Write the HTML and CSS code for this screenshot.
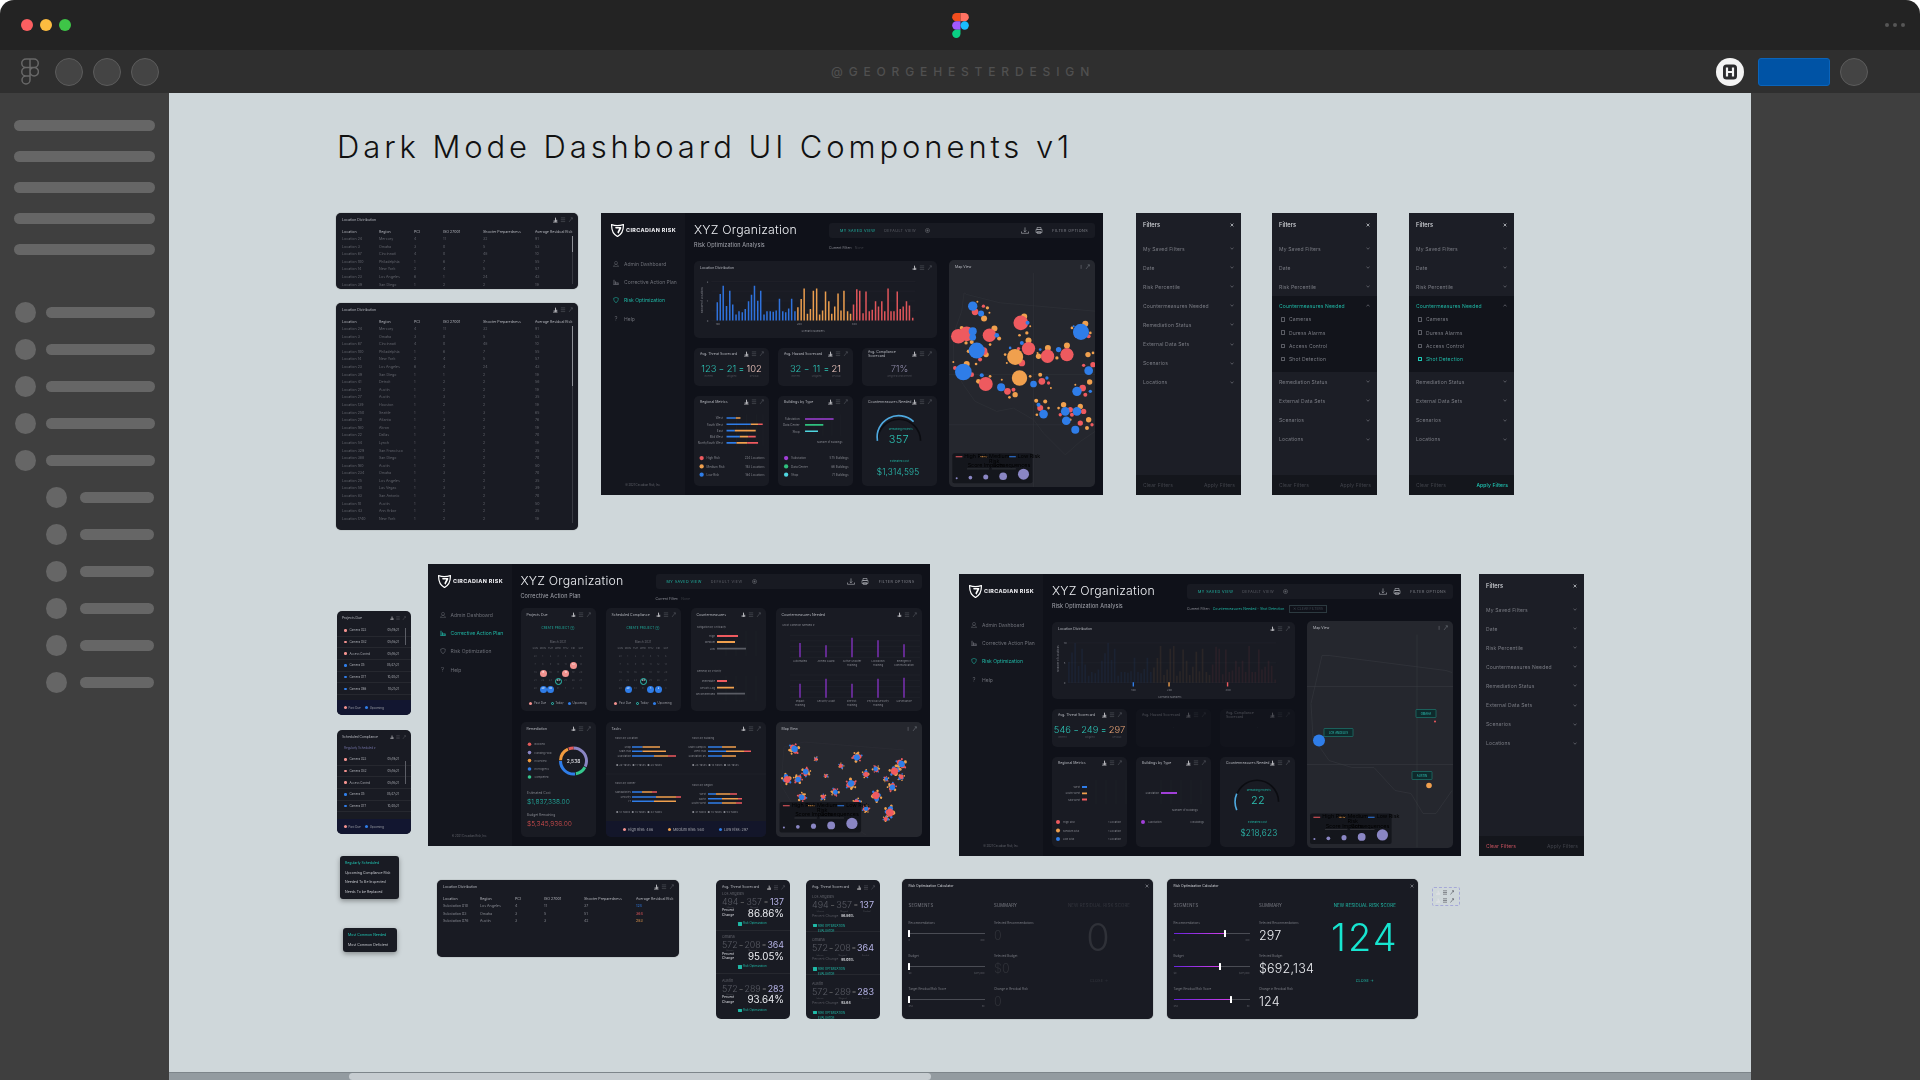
FILE: index.html
```html
<!DOCTYPE html>
<html lang="en">
<head>
<meta charset="utf-8">
<title>Dark Mode Dashboard UI Components v1</title>
<link rel="stylesheet" href="styles.css">
</head>
<body>
<svg class="sprite" aria-hidden="true">
  <defs>
    <symbol id="tools" viewBox="0 0 18 5"><path d="M0 5h4M1 4.500V3M2.200 4.500V.6M3.300 4.500V2.500" stroke="#e6e6ea" stroke-width=".7" fill="none"/><path d="M7 .8h4M7 2.500h4M7 4.200h4M14.500 4.500l3-3.800M16 .7h1.500v1.500" stroke="#50525a" stroke-width=".6" fill="none"/></symbol>
    <symbol id="tools2" viewBox="0 0 18 5"><path d="M10 .8v3.600M14.500 4.500l3-3.800M16 .7h1.500v1.500" stroke="#6a6c74" stroke-width=".6" fill="none"/></symbol>
    <symbol id="chev" viewBox="0 0 4 3"><path d="M.5 .8l1.500 1.400 1.500-1.400" stroke="currentColor" stroke-width=".7" fill="none"/></symbol>
    <symbol id="chevu" viewBox="0 0 4 3"><path d="M.5 2.200l1.500-1.400 1.500 1.400" stroke="currentColor" stroke-width=".7" fill="none"/></symbol>
    <symbol id="x" viewBox="0 0 4 4"><path d="M.6 .6l2.800 2.800M3.400 .6L.6 3.400" stroke="currentColor" stroke-width=".7"/></symbol>
    <symbol id="shield" viewBox="0 0 14 14"><path d="M.7 .7c3 1 9 1 12.600 0 .3 5.500-1.800 10.500-6.300 12.800C2.600 11.200.4 6.200.7 .7z" fill="none" stroke="#fff" stroke-width="1.300"/><path d="M4.500 3.200h6.500v1.600L8 10.500 6.800 8.800l2-4H5z" fill="#fff"/></symbol>
    <symbol id="n-user" viewBox="0 0 6 6"><path d="M3 .4a1.500 1.500 0 1 1 0 3 1.500 1.500 0 0 1 0-3zM.5 5.600c.4-1.400 1.300-2.200 2.500-2.200s2.100.8 2.500 2.200z" fill="none" stroke="currentColor" stroke-width=".45"/></symbol>
    <symbol id="n-bars" viewBox="0 0 6 6"><path d="M.3 5.700h5.400M1 5.400V.8M2.500 5.400V2.400M4 5.400V3M5.200 5.400V3.600" stroke="currentColor" stroke-width=".8" fill="none"/></symbol>
    <symbol id="n-shield" viewBox="0 0 6 6"><path d="M.7 1.200C1.800 1 2.500.7 3 .3c.5.400 1.200.7 2.300.9.100 2.100-.7 3.600-2.300 4.500C1.400 4.800.6 3.300.7 1.200z" fill="none" stroke="currentColor" stroke-width=".55"/></symbol>
    <symbol id="t-down" viewBox="0 0 8 7"><path d="M.5 6.300h7M.5 6.300V4.500M7.500 6.300V4.500M4 .4v4.400M2.700 3.500L4 4.800l1.300-1.300" stroke="#b3b5bc" stroke-width=".6" fill="none"/></symbol>
    <symbol id="t-print" viewBox="0 0 8 7"><path d="M2 .5h4v2H2zM1 2.500h6v3H1zM2.300 4.500h3.400v2H2.300z" stroke="#b3b5bc" stroke-width=".6" fill="none"/></symbol>
    <symbol id="t-plus" viewBox="0 0 6 6"><circle cx="3" cy="3" r="2.500" stroke="#8a8c94" stroke-width=".5" fill="none"/><path d="M3 1.600v2.800M1.600 3h2.800" stroke="#8a8c94" stroke-width=".5"/></symbol>
    <g id="bars1" fill="none" stroke-width="4.600">
      <path stroke="#2f72dc" d="M348 330v-55M357 330v-80M366 330v-105M376 330v-44M386 330v-90M395 330v-48M405 330v-18M414 330v-28M424 330v-25M433 330v-35M443 330v-58M452 330v-78M461 330v-105M471 330v-60M480 330v-90M490 330v-18M499 330v-28M509 330v-28M518 330v-26M527 330v-30M537 330v-66M547 330v-28M556 330v-25M565 330v-36M574 330v-66M584 330v-28"/>
      <path stroke="#ea9d4e" d="M593 330v-40M603 330v-65M612 330v-97M622 330v-20M631 330v-35M640 330v-90M650 330v-97M659 330v-18M668 330v-30M677 330v-88M687 330v-58M696 330v-20M705 330v-42M715 330v-82M724 330v-30M733 330v-90M744 330v-28M753 330v-20"/>
      <path stroke="#e0555a" d="M762 330v-48M772 330v-95M781 330v-90M791 330v-22M800 330v-88M810 330v-28M819 330v-32M829 330v-58M838 330v-42M848 330v-58M857 330v-28M867 330v-97M876 330v-28M885 330v-28M895 330v-88M904 330v-35M913 330v-42M923 330v-58M932 330v-45M942 330v-8"/>
    </g>
    <g id="legend">
      <rect width="240" height="90" rx="6" fill="#14161c"/>
      <path d="M10 11h20" stroke="#ee5a5f" stroke-width="3"/><path d="M84 11h20" stroke="#f0a04e" stroke-width="3"/><path d="M170 11h20" stroke="#2f7de8" stroke-width="3"/>
      <text class="sm" x="36" y="14">High Risk</text><text class="sm" x="110" y="14">Medium</text><text class="sm" x="110" y="28">Risk</text><text class="sm" x="196" y="14">Low Risk</text>
      <text class="sm" x="46" y="42">Score Impacts</text><text class="sm" x="120" y="42">Consequences</text>
      <path d="M44 47h66M118 47h72" stroke="#6a6c74" stroke-width="1"/>
      <g fill="#8a86c4"><circle cx="13" cy="75" r="3"/><circle cx="54" cy="73" r="5.500"/><circle cx="100" cy="71" r="7.500"/><circle cx="152" cy="69" r="11.500"/><circle cx="213" cy="63" r="16.500"/></g>
    </g>
    <g id="cl">
      <circle cx="3" cy="-2.200" r="1.200" fill="#f0a04e"/><circle cx="-3" cy="2" r="1" fill="#f0a04e"/><circle cx="-3.800" cy="-1.500" r=".8" fill="#2f7de8"/><circle cx="3.600" cy="2" r=".8" fill="#ee5a5f"/><circle cx="0" cy="-3.800" r=".8" fill="#ee5a5f"/><circle cx="-.5" cy="4" r=".8" fill="#f0a04e"/>
      <circle cx="-1.500" cy="-1" r="2" fill="#ee5a5f"/><circle cx="1.500" cy="1.300" r="1.800" fill="#ee5a5f"/><circle cx="-1.400" cy="1.700" r="1.400" fill="#f0a04e"/><circle cx=".4" cy="-.2" r="2.500" fill="#2f7de8"/>
    </g>
    <g id="cl2">
      <circle cx="3.400" cy="1" r=".9" fill="#2f7de8"/><circle cx="-3" cy="-2.800" r=".9" fill="#f0a04e"/><circle cx="-3.500" cy="1.400" r=".9" fill="#f0a04e"/><circle cx="1.500" cy="3.500" r=".9" fill="#f0a04e"/>
      <circle cx="-1.800" cy="-1.400" r="1.700" fill="#2f7de8"/><circle cx="1.500" cy="-1.500" r="1.500" fill="#f0a04e"/><circle cx="-1.200" cy="1.800" r="1.400" fill="#2f7de8"/><circle cx=".3" cy=".3" r="2.600" fill="#ee5a5f"/>
    </g>
  </defs>
</svg>

<div class="shell">
  <header class="titlebar">
    <div class="lights"><i class="l-red"></i><i class="l-yellow"></i><i class="l-green"></i></div>
    <svg class="figma" viewBox="0 0 16 24"><path d="M0 4a4 4 0 0 1 4-4h4v8H4a4 4 0 0 1-4-4z" fill="#f24e1e"/><path d="M8 0h4a4 4 0 0 1 0 8H8z" fill="#ff7262"/><path d="M0 12a4 4 0 0 1 4-4h4v8H4a4 4 0 0 1-4-4z" fill="#a259ff"/><circle cx="12" cy="12" r="4" fill="#1abcfe"/><path d="M0 20a4 4 0 0 1 4-4h4v4a4 4 0 0 1-8 0z" fill="#0acf83"/></svg>
    <div class="dots"><i></i><i></i><i></i></div>
  </header>
  <div class="toolbar">
    <div class="tb-left">
      <svg class="figma-o" viewBox="0 0 18 27"><path d="M9 1H5a4 4 0 0 0 0 8.500h4zM9 1h4a4 4 0 0 1 0 8.500H9zM9 9.500H5a4 4 0 0 0 0 8.500h4zM9 18H5a4 4 0 1 0 4 4zM9 13.700a4.200 4.200 0 1 0 8.400 0 4.200 4.200 0 0 0-8.400 0z" fill="none" stroke="#686868" stroke-width="1.500"/></svg>
      <i class="tb-circle"></i><i class="tb-circle"></i><i class="tb-circle"></i>
    </div>
    <div class="tb-brand">@GEORGEHESTERDESIGN</div>
    <div class="tb-right">
      <svg class="hlogo" viewBox="0 0 28 28"><circle cx="14" cy="14" r="14" fill="#f4f4f4"/><rect x="7" y="6.500" width="14" height="15" rx="3.500" fill="#2c2c2e"/><path d="M11 9.500v9M17 9.500v9M11 14h6" stroke="#f4f4f4" stroke-width="2.200" fill="none"/></svg>
      <i class="tb-blue"></i>
      <i class="tb-circle"></i>
    </div>
  </div>
  <div class="body">
    <aside class="side">
      <div class="pills"><i></i><i></i><i></i><i></i><i></i></div>
      <div class="rows">
        <div class="s-row"><b></b><i></i></div><div class="s-row"><b></b><i></i></div><div class="s-row"><b></b><i></i></div><div class="s-row"><b></b><i></i></div><div class="s-row"><b></b><i></i></div>
        <div class="s-row in"><b></b><i></i></div><div class="s-row in"><b></b><i></i></div><div class="s-row in"><b></b><i></i></div><div class="s-row in"><b></b><i></i></div><div class="s-row in"><b></b><i></i></div><div class="s-row in"><b></b><i></i></div>
      </div>
    </aside>

    <main class="canvas">
      <h1 class="page-title">Dark Mode Dashboard UI Components v1</h1>

      <!-- tables -->
      <section class="frame tbl f-ta">
        <header class="c-head"><span>Location Distribution</span><svg class="tools"><use href="#tools"/></svg></header>
        <table><colgroup><col class="c1"><col class="c2"><col class="c3"><col class="c4"><col class="c5"><col></colgroup>
          <thead><tr><th>Location</th><th>Region</th><th>PCI</th><th>ISO 27001</th><th>Shooter Preparedness</th><th>Average Residual Risk</th></tr></thead>
          <tbody>
            <tr><td>Location 24</td><td>Mercury</td><td>4</td><td>11</td><td>32</td><td>91</td></tr>
            <tr><td>Location 3</td><td>Omaha</td><td>3</td><td>0</td><td>5</td><td>53</td></tr>
            <tr><td>Location 67</td><td>Cincinnati</td><td>4</td><td>0</td><td>48</td><td>10</td></tr>
            <tr><td>Location 100</td><td>Philadelphia</td><td>1</td><td>6</td><td>7</td><td>55</td></tr>
            <tr><td>Location 14</td><td>New York</td><td>2</td><td>4</td><td>5</td><td>57</td></tr>
            <tr><td>Location 23</td><td>Los Angeles</td><td>6</td><td>1</td><td>24</td><td>43</td></tr>
            <tr><td>Location 39</td><td>San Diego</td><td>1</td><td>2</td><td>2</td><td>19</td></tr>
          </tbody></table>
        <i class="t-scroll t-s1"></i>
      </section>
      <section class="frame tbl f-tb">
        <header class="c-head"><span>Location Distribution</span><svg class="tools"><use href="#tools"/></svg></header>
        <table><colgroup><col class="c1"><col class="c2"><col class="c3"><col class="c4"><col class="c5"><col></colgroup>
          <thead><tr><th>Location</th><th>Region</th><th>PCI</th><th>ISO 27001</th><th>Shooter Preparedness</th><th>Average Residual Risk</th></tr></thead>
          <tbody>
            <tr><td>Location 24</td><td>Mercury</td><td>4</td><td>11</td><td>32</td><td>91</td></tr>
            <tr><td>Location 3</td><td>Omaha</td><td>3</td><td>0</td><td>5</td><td>53</td></tr>
            <tr><td>Location 67</td><td>Cincinnati</td><td>4</td><td>0</td><td>48</td><td>10</td></tr>
            <tr><td>Location 100</td><td>Philadelphia</td><td>1</td><td>6</td><td>7</td><td>55</td></tr>
            <tr><td>Location 14</td><td>New York</td><td>2</td><td>4</td><td>5</td><td>57</td></tr>
            <tr><td>Location 23</td><td>Los Angeles</td><td>6</td><td>4</td><td>24</td><td>43</td></tr>
            <tr><td>Location 39</td><td>San Diego</td><td>1</td><td>1</td><td>2</td><td>19</td></tr>
            <tr><td>Location 41</td><td>Detroit</td><td>1</td><td>2</td><td>2</td><td>56</td></tr>
            <tr><td>Location 21</td><td>Austin</td><td>1</td><td>2</td><td>2</td><td>19</td></tr>
            <tr><td>Location 27</td><td>Austin</td><td>1</td><td>3</td><td>2</td><td>35</td></tr>
            <tr><td>Location 139</td><td>Houston</td><td>1</td><td>2</td><td>2</td><td>19</td></tr>
            <tr><td>Location 250</td><td>Seattle</td><td>1</td><td>1</td><td>3</td><td>65</td></tr>
            <tr><td>Location 20</td><td>Atlanta</td><td>1</td><td>3</td><td>2</td><td>76</td></tr>
            <tr><td>Location 160</td><td>Akron</td><td>1</td><td>2</td><td>2</td><td>19</td></tr>
            <tr><td>Location 22</td><td>Dallas</td><td>1</td><td>3</td><td>2</td><td>70</td></tr>
            <tr><td>Location 54</td><td>Lynch</td><td>1</td><td>3</td><td>2</td><td>19</td></tr>
            <tr><td>Location 329</td><td>San Francisco</td><td>1</td><td>3</td><td>2</td><td>35</td></tr>
            <tr><td>Location 388</td><td>San Diego</td><td>1</td><td>2</td><td>2</td><td>70</td></tr>
            <tr><td>Location 160</td><td>Austin</td><td>1</td><td>2</td><td>2</td><td>50</td></tr>
            <tr><td>Location 234</td><td>Omaha</td><td>1</td><td>3</td><td>2</td><td>70</td></tr>
            <tr><td>Location 25</td><td>Los Angeles</td><td>1</td><td>2</td><td>2</td><td>35</td></tr>
            <tr><td>Location 50</td><td>Las Vegas</td><td>1</td><td>3</td><td>3</td><td>39</td></tr>
            <tr><td>Location 83</td><td>San Antonio</td><td>1</td><td>3</td><td>2</td><td>70</td></tr>
            <tr><td>Location 10</td><td>Austin</td><td>1</td><td>2</td><td>2</td><td>50</td></tr>
            <tr><td>Location 43</td><td>Ann Arbor</td><td>1</td><td>2</td><td>2</td><td>35</td></tr>
            <tr><td>Location 1740</td><td>New York</td><td>1</td><td>2</td><td>2</td><td>19</td></tr>
          </tbody></table>
        <i class="t-scroll t-s2"></i>
      </section>

      <!-- dashboard: risk optimization -->
      <section class="frame dash f-d1">
        <aside class="d-side">
          <div class="logo"><svg><use href="#shield"/></svg><span>CIRCADIAN RISK</span></div>
          <nav class="d-nav">
            <a><svg><use href="#n-user"/></svg>Admin Dashboard</a>
            <a><svg><use href="#n-bars"/></svg>Corrective Action Plan</a>
            <a class="on"><svg><use href="#n-shield"/></svg>Risk Optimization</a>
            <a><b class="q">?</b>Help</a>
          </nav>
          <small class="d-copy">© 2021 Circadian Risk, Inc.</small>
        </aside>
        <div class="d-main">
          <header class="d-head">
            <div class="d-titles"><h2>XYZ Organization</h2><p>Risk Optimization Analysis</p></div>
            <div class="d-tools">
              <div class="d-bar"><span class="on">MY SAVED VIEW</span><span>DEFAULT VIEW</span><svg class="t-plus"><use href="#t-plus"/></svg><em></em><svg class="t-i"><use href="#t-down"/></svg><svg class="t-i"><use href="#t-print"/></svg><span class="opt">FILTER OPTIONS</span></div>
              <p class="d-filter">Current Filter: <b>None</b></p>
            </div>
          </header>
          <div class="g1">
            <div class="g1-left">
              <article class="card wide">
                <header class="c-head"><span>Location Distribution</span><svg class="tools"><use href="#tools"/></svg></header>
                <svg class="chart" viewBox="283 189 727 193">
                  <path d="M330 212h620M330 241h620M330 271h620M330 301h620M330 331h620" stroke="#2a2c34" stroke-width="1" fill="none"/>
                  <use href="#bars1"/>
                  <g class="tk"><text x="316" y="215">2</text><text x="316" y="274">1</text><text x="316" y="334">0</text><text x="343" y="343" fill="#2f7de8">100</text><text x="590" y="343" fill="#f0a04e">200</text><text x="757" y="343" fill="#ee5a5f">300</text><text x="604" y="366">Scenario Numbers</text><text transform="translate(305 308) rotate(-90)">Number of Locations</text></g>
                </svg>
              </article>
              <article class="card">
                <header class="c-head"><span>Avg. Threat Scorecard</span><svg class="tools"><use href="#tools"/></svg></header>
                <div class="eq"><div><b>123</b><small>Inherent</small></div><i>−</i><div><b>21</b><small>Mitigated</small></div><i>=</i><div class="res"><b>102</b><small>Residual</small></div></div>
              </article>
              <article class="card">
                <header class="c-head"><span>Avg. Hazard Scorecard</span><svg class="tools"><use href="#tools"/></svg></header>
                <div class="eq"><div><b>32</b><small>Inherent</small></div><i>−</i><div><b>11</b><small>Mitigated</small></div><i>=</i><div class="res"><b>21</b><small>Residual</small></div></div>
              </article>
              <article class="card">
                <header class="c-head"><span>Avg. Compliance Scorecard</span><svg class="tools"><use href="#tools"/></svg></header>
                <div class="eq pct"><div><b>71%</b><small>Weighted Measurement</small></div></div>
              </article>
              <article class="card">
                <header class="c-head"><span>Regional Metrics</span><svg class="tools"><use href="#tools"/></svg></header>
                <svg class="chart" viewBox="283 594 224 232">
                  <path d="M410 610v95M440 610v95M470 610v95M490 610v95" stroke="#26282f" fill="none"/>
                  <g stroke-width="5" fill="none">
                    <path stroke="#2f7de8" d="M380 621h28M380 640h73M380 659h25M380 677h40M380 696h30"/>
                    <path stroke="#f0a04e" d="M408 621h14M453 640h22M405 659h63M420 677h25M410 696h32"/>
                    <path stroke="#ee5a5f" d="M475 640h14M445 677h23M442 696h33"/>
                  </g>
                  <g class="lb" text-anchor="end"><text x="369" y="625">West</text><text x="369" y="644">South West</text><text x="369" y="663">East</text><text x="369" y="681">Mid West</text><text x="369" y="700">North/South West</text></g>
                  <circle cx="305" cy="742" r="6.500" fill="#ee5a5f"/><circle cx="305" cy="767" r="6.500" fill="#f0a04e"/><circle cx="305" cy="792" r="6.500" fill="#2f7de8"/>
                  <g class="lb"><text x="320" y="746">High Risk</text><text x="320" y="771">Medium Risk</text><text x="320" y="796">Low Risk</text></g>
                  <g class="lb" text-anchor="end"><text x="495" y="746">224 Locations</text><text x="495" y="771">193 Locations</text><text x="495" y="796">184 Locations</text></g>
                </svg>
              </article>
              <article class="card">
                <header class="c-head"><span>Buildings by Type</span><svg class="tools"><use href="#tools"/></svg></header>
                <svg class="chart" viewBox="533 594 225 232">
                  <path d="M614 610v65M641 610v65M668 610v65M695 610v65M722 610v65" stroke="#26282f" fill="none"/>
                  <path d="M614 624h86" stroke="#a13fd8" stroke-width="5"/><path d="M614 642h55" stroke="#2fc07e" stroke-width="5"/><path d="M614 661h39" stroke="#4fd6e0" stroke-width="5"/>
                  <g class="lb" text-anchor="end"><text x="598" y="628">Substation</text><text x="598" y="646">Data Center</text><text x="598" y="665">Shop</text></g>
                  <text class="tk" x="650" y="697">Number of Buildings</text>
                  <circle cx="557" cy="742" r="6.500" fill="#a13fd8"/><circle cx="557" cy="767" r="6.500" fill="#2fc07e"/><circle cx="557" cy="792" r="6.500" fill="#4fd6e0"/>
                  <g class="lb"><text x="572" y="746">Substation</text><text x="572" y="771">Data Center</text><text x="572" y="796">Shop</text></g>
                  <g class="lb" text-anchor="end"><text x="745" y="746">575 Buildings</text><text x="745" y="771">86 Buildings</text><text x="745" y="796">71 Buildings</text></g>
                </svg>
              </article>
              <article class="card">
                <header class="c-head"><span>Countermeasures Needed</span><svg class="tools"><use href="#tools"/></svg></header>
                <svg class="chart" viewBox="787 594 223 232">
                  <path d="M832 690A65 65 0 0 1 962 690" stroke="#0b0c11" stroke-width="5" fill="none"/>
                  <path d="M832 690A65 65 0 0 1 941 632" stroke="#4ea8de" stroke-width="5" fill="none"/>
                  <text class="tk teal" x="866" y="657">Remaining Projects</text>
                  <text class="gv" x="866" y="697">357</text>
                  <text class="tk teal" x="870" y="753">Estimated Cost</text>
                  <text class="gm" x="830" y="792">$1,314,595</text>
                </svg>
              </article>
            </div>
            <article class="card map">
              <header class="c-head"><span>Map View</span><svg class="tools"><use href="#tools2"/></svg></header>
              <svg class="chart" viewBox="1047 186 437 640">
                <path d="M1092 245l8 5 100 25 284 25M1092 245l-7 55-25 70v100l30 50 35 50 65 30 50-10 60 35 30 40 15 15 50 50 45-40 44-30M1047 490h437M1047 640h437M1300 186v640" stroke="#3a3c44" fill="none"/>
                <g fill="#f0a04e"><circle cx="1152" cy="322" r="9"/><circle cx="1162" cy="290" r="5"/><circle cx="1272" cy="316" r="9"/><circle cx="1280" cy="365" r="5"/><circle cx="1290" cy="345" r="3"/><circle cx="1258" cy="372" r="4"/><circle cx="1085" cy="350" r="6"/><circle cx="1098" cy="395" r="5"/><circle cx="1183" cy="352" r="9"/><circle cx="1197" cy="382" r="6"/><circle cx="1170" cy="400" r="4"/><circle cx="1115" cy="392" r="6"/><circle cx="1158" cy="430" r="8"/><circle cx="1105" cy="420" r="5"/><circle cx="1455" cy="338" r="9"/><circle cx="1415" cy="350" r="4"/><circle cx="1470" cy="365" r="4"/><circle cx="1285" cy="388" r="9"/><circle cx="1312" cy="425" r="3"/><circle cx="1215" cy="430" r="4"/><circle cx="1343" cy="410" r="9"/><circle cx="1315" cy="435" r="8"/><circle cx="1400" cy="403" r="9"/><circle cx="1370" cy="440" r="5"/><circle cx="1100" cy="458" r="9"/><circle cx="1135" cy="510" r="7"/><circle cx="1170" cy="495" r="4"/><circle cx="1245" cy="550" r="8"/><circle cx="1290" cy="495" r="4"/><circle cx="1320" cy="490" r="6"/><circle cx="1463" cy="430" r="8"/><circle cx="1468" cy="512" r="8"/><circle cx="1425" cy="520" r="3"/><circle cx="1308" cy="568" r="6"/><circle cx="1335" cy="570" r="6"/><circle cx="1345" cy="590" r="4"/><circle cx="1310" cy="610" r="4"/><circle cx="1390" cy="580" r="8"/><circle cx="1440" cy="585" r="8"/><circle cx="1465" cy="625" r="8"/><circle cx="1460" cy="650" r="6"/><circle cx="1168" cy="305" r="3"/><circle cx="1132" cy="272" r="3"/><circle cx="1060" cy="452" r="3"/><circle cx="1128" cy="458" r="4"/><circle cx="1205" cy="505" r="3"/><circle cx="1228" cy="558" r="4"/><circle cx="1352" cy="530" r="3"/><circle cx="1410" cy="625" r="4"/><circle cx="1375" cy="590" r="4"/><circle cx="1478" cy="425" r="4"/><circle cx="1220" cy="455" r="3"/></g>
                <g fill="#ee5a5f"><circle cx="1125" cy="302" r="10"/><circle cx="1150" cy="285" r="5"/><circle cx="1262" cy="335" r="22"/><circle cx="1075" cy="375" r="22"/><circle cx="1100" cy="368" r="22"/><circle cx="1168" cy="372" r="20"/><circle cx="1150" cy="420" r="12"/><circle cx="1140" cy="445" r="6"/><circle cx="1430" cy="372" r="8"/><circle cx="1465" cy="375" r="6"/><circle cx="1285" cy="412" r="20"/><circle cx="1265" cy="455" r="10"/><circle cx="1255" cy="412" r="5"/><circle cx="1342" cy="435" r="20"/><circle cx="1400" cy="430" r="20"/><circle cx="1065" cy="470" r="6"/><circle cx="1115" cy="490" r="7"/><circle cx="1157" cy="518" r="21"/><circle cx="1222" cy="540" r="10"/><circle cx="1240" cy="535" r="6"/><circle cx="1325" cy="510" r="10"/><circle cx="1345" cy="515" r="5"/><circle cx="1478" cy="460" r="8"/><circle cx="1450" cy="462" r="5"/><circle cx="1447" cy="530" r="10"/><circle cx="1455" cy="550" r="6"/><circle cx="1320" cy="590" r="9"/><circle cx="1410" cy="595" r="8"/><circle cx="1450" cy="600" r="8"/><circle cx="1415" cy="610" r="6"/><circle cx="1440" cy="635" r="8"/><circle cx="1475" cy="640" r="5"/><circle cx="1380" cy="610" r="5"/></g>
                <g fill="#f0a04e"><circle cx="1245" cy="437" r="24"/><circle cx="1258" cy="500" r="23"/></g>
                <g fill="#2f7de8"><circle cx="1118" cy="285" r="14"/><circle cx="1143" cy="307" r="9"/><circle cx="1282" cy="335" r="6"/><circle cx="1118" cy="360" r="12"/><circle cx="1118" cy="378" r="10"/><circle cx="1190" cy="372" r="7"/><circle cx="1130" cy="418" r="24"/><circle cx="1442" cy="362" r="24"/><circle cx="1420" cy="345" r="3"/><circle cx="1265" cy="395" r="6"/><circle cx="1230" cy="410" r="4"/><circle cx="1320" cy="415" r="4"/><circle cx="1375" cy="415" r="8"/><circle cx="1090" cy="482" r="25"/><circle cx="1145" cy="492" r="6"/><circle cx="1203" cy="528" r="12"/><circle cx="1300" cy="518" r="10"/><circle cx="1340" cy="500" r="5"/><circle cx="1465" cy="478" r="13"/><circle cx="1430" cy="540" r="14"/><circle cx="1470" cy="540" r="5"/><circle cx="1330" cy="608" r="13"/><circle cx="1315" cy="580" r="6"/><circle cx="1395" cy="600" r="13"/><circle cx="1430" cy="600" r="13"/><circle cx="1398" cy="628" r="13"/><circle cx="1425" cy="655" r="12"/></g>
                <use href="#legend" x="1057" y="725"/>
              </svg>
            </article>
          </div>
        </div>
      </section>

      <!-- filter panels -->
      <section class="frame filters f-p1">
        <header class="fp-head"><b>Filters</b><svg class="x"><use href="#x"/></svg></header>
        <ul class="fp-list">
          <li>My Saved Filters<svg class="chev"><use href="#chev"/></svg></li><li>Date<svg class="chev"><use href="#chev"/></svg></li><li>Risk Percentile<svg class="chev"><use href="#chev"/></svg></li><li>Countermeasures Needed<svg class="chev"><use href="#chev"/></svg></li><li>Remediation Status<svg class="chev"><use href="#chev"/></svg></li><li>External Data Sets<svg class="chev"><use href="#chev"/></svg></li><li>Scenarios<svg class="chev"><use href="#chev"/></svg></li><li>Locations<svg class="chev"><use href="#chev"/></svg></li>
        </ul>
        <footer class="fp-foot"><span>Clear Filters</span><span>Apply Filters</span></footer>
      </section>
      <section class="frame filters f-p2">
        <header class="fp-head"><b>Filters</b><svg class="x"><use href="#x"/></svg></header>
        <ul class="fp-list">
          <li>My Saved Filters<svg class="chev"><use href="#chev"/></svg></li><li>Date<svg class="chev"><use href="#chev"/></svg></li><li>Risk Percentile<svg class="chev"><use href="#chev"/></svg></li>
          <li class="open"><div class="open-h">Countermeasures Needed<svg class="chev"><use href="#chevu"/></svg></div>
            <div class="opt"><i></i>Cameras</div><div class="opt"><i></i>Duress Alarms</div><div class="opt"><i></i>Access Control</div><div class="opt"><i></i>Shot Detection</div></li>
          <li>Remediation Status<svg class="chev"><use href="#chev"/></svg></li><li>External Data Sets<svg class="chev"><use href="#chev"/></svg></li><li>Scenarios<svg class="chev"><use href="#chev"/></svg></li><li>Locations<svg class="chev"><use href="#chev"/></svg></li>
        </ul>
        <footer class="fp-foot"><span>Clear Filters</span><span>Apply Filters</span></footer>
      </section>
      <section class="frame filters f-p3">
        <header class="fp-head"><b>Filters</b><svg class="x"><use href="#x"/></svg></header>
        <ul class="fp-list">
          <li>My Saved Filters<svg class="chev"><use href="#chev"/></svg></li><li>Date<svg class="chev"><use href="#chev"/></svg></li><li>Risk Percentile<svg class="chev"><use href="#chev"/></svg></li>
          <li class="open"><div class="open-h">Countermeasures Needed<svg class="chev"><use href="#chevu"/></svg></div>
            <div class="opt"><i></i>Cameras</div><div class="opt"><i></i>Duress Alarms</div><div class="opt"><i></i>Access Control</div><div class="opt sel"><i></i>Shot Detection</div></li>
          <li>Remediation Status<svg class="chev"><use href="#chev"/></svg></li><li>External Data Sets<svg class="chev"><use href="#chev"/></svg></li><li>Scenarios<svg class="chev"><use href="#chev"/></svg></li><li>Locations<svg class="chev"><use href="#chev"/></svg></li>
        </ul>
        <footer class="fp-foot"><span>Clear Filters</span><span class="apply">Apply Filters</span></footer>
      </section>

      <!-- mobile lists -->
      <section class="frame mob f-m1">
        <header class="c-head"><span>Projects Due</span><svg class="tools"><use href="#tools"/></svg></header>
        <ul class="m-list"><li><i class="d-r"></i>Camera #23<span>05/19/21</span></li><li><i class="d-r"></i>Camera #42<span>05/18/21</span></li><li><i class="d-r"></i>Access Control<span>05/16/21</span></li><li><i class="d-b"></i>Camera #5<span>05/27/21</span></li><li><i class="d-b"></i>Camera #77<span>10/20/21</span></li><li><i class="d-b"></i>Camera #68<span>10/21/21</span></li></ul>
        <i class="m-scroll"></i>
        <footer class="m-foot"><i class="d-r"></i>Past Due<i class="d-b"></i>Upcoming</footer>
      </section>
      <section class="frame mob f-m2">
        <header class="c-head"><span>Scheduled Compliance</span><svg class="tools"><use href="#tools"/></svg></header>
        <p class="m-sel">Regularly Scheduled ▾</p>
        <ul class="m-list"><li><i class="d-r"></i>Camera #23<span>05/19/21</span></li><li><i class="d-r"></i>Camera #42<span>05/18/21</span></li><li><i class="d-r"></i>Access Control<span>05/16/21</span></li><li><i class="d-b"></i>Camera #5<span>05/27/21</span></li><li><i class="d-b"></i>Camera #77<span>10/20/21</span></li></ul>
        <i class="m-scroll m-s2"></i>
        <footer class="m-foot"><i class="d-r"></i>Past Due<i class="d-b"></i>Upcoming</footer>
      </section>

      <div class="frame menu f-dd1"><span class="on">Regularly Scheduled</span><span>Upcoming Compliance Risk</span><span>Needed To Be Inspected</span><span>Needs To be Replaced</span></div>
      <div class="frame menu f-dd2"><span class="on">Most Common Needed</span><span>Most Common Deficient</span></div>

      <!-- dashboard: corrective action plan -->
      <section class="frame dash f-d2">
        <aside class="d-side">
          <div class="logo"><svg><use href="#shield"/></svg><span>CIRCADIAN RISK</span></div>
          <nav class="d-nav">
            <a><svg><use href="#n-user"/></svg>Admin Dashboard</a>
            <a class="on"><svg><use href="#n-bars"/></svg>Corrective Action Plan</a>
            <a><svg><use href="#n-shield"/></svg>Risk Optimization</a>
            <a><b class="q">?</b>Help</a>
          </nav>
          <small class="d-copy">© 2021 Circadian Risk, Inc.</small>
        </aside>
        <div class="d-main">
          <header class="d-head short">
            <div class="d-titles"><h2>XYZ Organization</h2><p>Corrective Action Plan</p></div>
            <div class="d-tools">
              <div class="d-bar"><span class="on">MY SAVED VIEW</span><span>DEFAULT VIEW</span><svg class="t-plus"><use href="#t-plus"/></svg><em></em><svg class="t-i"><use href="#t-down"/></svg><svg class="t-i"><use href="#t-print"/></svg><span class="opt">FILTER OPTIONS</span></div>
              <p class="d-filter">Current Filter: <b>None</b></p>
            </div>
          </header>
          <div class="g2">
            <article class="card">
              <header class="c-head"><span>Projects Due</span><svg class="tools"><use href="#tools"/></svg></header>
              <p class="create">CREATE PROJECT ⊕</p>
              <p class="cal-m">March 2021</p>
              <div class="cal">
                <u>SUN</u><u>MON</u><u>TUE</u><u>WED</u><u>THU</u><u>FRI</u><u>SAT</u>
                <s>28</s><s>1</s><s>2</s><s>3</s><s>4</s><s>5</s><s>6</s>
                <s>7</s><s>8</s><s>9</s><s>10</s><s>11</s><s class="h-r">12</s><s>13</s>
                <s>14</s><s class="h-r">15</s><s>16</s><s>17</s><s class="h-r">18</s><s>19</s><s>20</s>
                <s>21</s><s>22</s><s>23</s><s class="h-t">24</s><s>25</s><s>26</s><s>27</s>
                <s>28</s><s class="h-b">29</s><s class="h-b">30</s><s>31</s><s>1</s><s>2</s><s>3</s>
              </div>
              <p class="cal-l"><i class="d-r"></i>Past Due<i class="d-t"></i>Today<i class="d-b"></i>Upcoming</p>
            </article>
            <article class="card">
              <header class="c-head"><span>Scheduled Compliance</span><svg class="tools"><use href="#tools"/></svg></header>
              <p class="create">CREATE PROJECT ⊕</p>
              <p class="cal-m">March 2021</p>
              <div class="cal">
                <u>SUN</u><u>MON</u><u>TUE</u><u>WED</u><u>THU</u><u>FRI</u><u>SAT</u>
                <s>28</s><s>1</s><s>2</s><s>3</s><s>4</s><s>5</s><s>6</s>
                <s>7</s><s>8</s><s>9</s><s>10</s><s>11</s><s>12</s><s>13</s>
                <s>14</s><s>15</s><s>16</s><s>17</s><s>18</s><s>19</s><s>20</s>
                <s>21</s><s>22</s><s>23</s><s class="h-t">24</s><s>25</s><s>26</s><s>27</s>
                <s>28</s><s class="h-b">29</s><s>30</s><s>31</s><s class="h-b">1</s><s class="h-b">2</s><s>3</s>
              </div>
              <p class="cal-l"><i class="d-r"></i>Past Due<i class="d-t"></i>Today<i class="d-b"></i>Upcoming</p>
            </article>
            <article class="card">
              <header class="c-head"><span>Countermeasures</span><svg class="tools"><use href="#tools"/></svg></header>
              <svg class="chart px" viewBox="0 0 75 90">
                <path d="M35 10v25M45 10v25M55 10v25M65 10v25M35 55v25M45 55v25M55 55v25M65 55v25" stroke="#26282f" stroke-width=".35" fill="none"/>
                <g stroke-width="1.800" fill="none"><path stroke="#ee5a5f" d="M26 15h21M26 60h10"/><path stroke="#f0a04e" d="M26 21h18M26 66.700h17"/><path stroke="#5a5c64" d="M26 27.700h29M26 72.700h28"/></g>
                <g class="pl"><text x="6" y="7">Mitigation by Criticality</text><text x="6" y="51">Remedy by Priority</text></g>
                <g class="pl" text-anchor="end"><text x="24" y="16">High</text><text x="24" y="22">Medium</text><text x="24" y="28.700">Low</text><text x="24" y="61">Immediate</text><text x="24" y="67.700">Results Log</text><text x="24" y="73.700">Recommended</text></g>
              </svg>
            </article>
            <article class="card">
              <header class="c-head"><span>Countermeasures Needed</span><svg class="tools"><use href="#tools"/></svg></header>
              <svg class="chart px" viewBox="0 0 146 90">
                <path d="M14 14.300h130M14 19.800h130M14 25.300h130M14 30.800h130M14 36.300h130M14 54h130M14 59.700h130M14 65.400h130M14 71h130M14 76.700h130" stroke="#292b33" stroke-width=".35" fill="none"/>
                <path d="M24 36.300v-14.300M50 36.300v-12M76 36.300v-19.600M102 36.300v-17M128 36.300v-13M24 76.700v-14M50 76.700v-19M76 76.700v-14M102 76.700v-19M128 76.700v-20" stroke="#8a34c9" stroke-width="1.300" fill="none"/>
                <text class="pl" x="6.600" y="5">Most Common Needed ▾</text>
                <g class="pl" text-anchor="middle"><text x="24" y="41">Automated</text><text x="50" y="41">Armed Guard</text><text x="76" y="41">Active Shooter</text><text x="76" y="44.500">Training</text><text x="102" y="41">Lockdown</text><text x="102" y="44.500">Training</text><text x="128" y="41">Emergency</text><text x="128" y="44.500">Communication</text><text x="24" y="81">Impact</text><text x="24" y="84.500">Training</text><text x="50" y="81">Security Audit</text><text x="76" y="81">Fire Ext.</text><text x="76" y="84.500">Training</text><text x="102" y="81">Physical Security</text><text x="102" y="84.500">Training</text><text x="128" y="81">Surveillance</text></g>
              </svg>
            </article>
            <article class="card">
              <header class="c-head"><span>Remediation</span><svg class="tools"><use href="#tools"/></svg></header>
              <svg class="chart px" viewBox="0 0 75 102">
                <circle cx="8.500" cy="9.300" r="1.800" fill="#e25a5a"/><circle cx="8.500" cy="17.600" r="1.800" fill="#8a86c4"/><circle cx="8.500" cy="25.600" r="1.800" fill="#f09a3e"/><circle cx="8.500" cy="34" r="1.800" fill="#2f7de8"/><circle cx="8.500" cy="42" r="1.800" fill="#35c78e"/>
                <g class="pl"><text x="13.500" y="10.300">Blocked</text><text x="13.500" y="18.600">Funding Hold</text><text x="13.500" y="26.600">In Review</text><text x="13.500" y="35">In Progress</text><text x="13.500" y="43">Completed</text></g>
                <g fill="none" stroke-width="3" transform="rotate(-90 52.500 26)">
                  <circle cx="52.500" cy="26" r="13" pathLength="100" stroke="#8a86c4" stroke-dasharray="32 68"/>
                  <circle cx="52.500" cy="26" r="13" pathLength="100" stroke="#35c78e" stroke-dasharray="14 86" stroke-dashoffset="-33"/>
                  <circle cx="52.500" cy="26" r="13" pathLength="100" stroke="#2f7de8" stroke-dasharray="27 73" stroke-dashoffset="-48"/>
                  <circle cx="52.500" cy="26" r="13" pathLength="100" stroke="#f09a3e" stroke-dasharray="17 83" stroke-dashoffset="-76"/>
                  <circle cx="52.500" cy="26" r="13" pathLength="100" stroke="#e25a5a" stroke-dasharray="6 94" stroke-dashoffset="-94"/>
                </g>
                <text class="dv" x="52.500" y="28" text-anchor="middle">2,538</text>
                <text class="pl big" x="6" y="59">Estimated Cost</text><text class="cost" x="6" y="69">$1,837,338.00</text>
                <text class="pl big" x="6" y="81">Budget Remaining</text><text class="cost red" x="6" y="91">$5,345,936.00</text>
              </svg>
            </article>
            <article class="card tasks">
              <header class="c-head"><span>Tasks</span><svg class="tools"><use href="#tools"/></svg></header>
              <svg class="chart px" viewBox="0 0 160 86">
                <path d="M0 39h160" stroke="#26282f" stroke-width=".4"/>
                <g stroke-width="1.600" fill="none">
                  <path stroke="#2f7de8" d="M26 12h10.500M26 16.300h10.500M26 21h22M102 12h14M102 16.300h18M102 21h14M26 57h10M26 62h24M26 66.300h22M102 59h8M102 63.700h14M102 68h14"/>
                  <path stroke="#f0a04e" d="M36.500 12h17.500M36.500 16.300h23.500M48 21h14M116 12h14M120 16.300h18M116 21h14M36 57h10M50 62h20M48 66.300h22M110 59h14M116 63.700h16M116 68h14"/>
                  <path stroke="#ee5a5f" d="M62 21h8M138 16.300h7M46 57h5M70 62h5M124 59h7M132 63.700h4M130 68h6"/>
                </g>
                <g class="pl"><text x="9" y="4">Tasks by Location</text><text x="86" y="4">Tasks by Building</text><text x="9" y="49">Tasks by Owner</text><text x="86" y="50.500">Tasks by Region</text></g>
                <g class="pl" text-anchor="end"><text x="25" y="13">Shop</text><text x="25" y="17.300">Main Hall</text><text x="25" y="22">Substation</text><text x="100" y="13">Main Campus</text><text x="100" y="17.300">West Hall</text><text x="100" y="22">Substation #5</text><text x="25" y="58">Mandatories</text><text x="25" y="63">Security</text><text x="25" y="67.300">IT</text><text x="100" y="60">West</text><text x="100" y="64.700">North</text><text x="100" y="69">South West</text></g>
                <g class="pl"><text x="10" y="31">● 29 Tasks&#160;&#160;● 11 Tasks&#160;&#160;● 24 Tasks</text><text x="86" y="31">● 24 Tasks&#160;&#160;● 14 Tasks&#160;&#160;● 44 Tasks</text><text x="10" y="78">● 13 Tasks&#160;&#160;● 14 Tasks&#160;&#160;● 43 Tasks</text><text x="86" y="78">● 41 Tasks&#160;&#160;● 14 Tasks&#160;&#160;● 54 Tasks</text></g>
              </svg>
              <footer class="t-foot"><span><i class="d-r"></i>High Risk: 486</span><span><i class="d-o"></i>Medium Risk: 560</span><span><i class="d-b"></i>Low Risk: 297</span></footer>
            </article>
            <article class="card map">
              <header class="c-head"><span>Map View</span><svg class="tools"><use href="#tools2"/></svg></header>
              <svg class="chart px" viewBox="0 0 146 102">
                <path d="M8 12l20-5 100 8M8 12L5 50l15 25 40 5 30 20" stroke="#33353c" stroke-width=".35" fill="none"/>
                <use href="#cl" transform="translate(18 14) rotate(20) scale(1.300)"/><use href="#cl2" transform="translate(40 24) rotate(70) scale(.6)"/><use href="#cl" transform="translate(81 22) rotate(140) scale(1.200)"/><use href="#cl2" transform="translate(65 31) rotate(200) scale(.75)"/><use href="#cl" transform="translate(30 37) rotate(250) scale(1.100)"/><use href="#cl2" transform="translate(11 44) rotate(30) scale(1.300)"/><use href="#cl" transform="translate(22 44) rotate(100) scale(1.100)"/><use href="#cl2" transform="translate(50 41) rotate(160) scale(.6)"/><use href="#cl" transform="translate(75 49) rotate(300) scale(1.300)"/><use href="#cl2" transform="translate(90 39) rotate(50) scale(1)"/><use href="#cl" transform="translate(100 34) rotate(210) scale(.9)"/><use href="#cl2" transform="translate(119 36) rotate(120) scale(1.400)"/><use href="#cl" transform="translate(125 29) rotate(10) scale(1.300)"/><use href="#cl" transform="translate(116 52) rotate(80) scale(1.100)"/><use href="#cl" transform="translate(26 62) rotate(170) scale(1.100)"/><use href="#cl2" transform="translate(47 62) rotate(260) scale(.8)"/><use href="#cl" transform="translate(59 57) rotate(40) scale(1)"/><use href="#cl2" transform="translate(81 67) rotate(130) scale(1)"/><use href="#cl2" transform="translate(100 61) rotate(220) scale(1.400)"/><use href="#cl" transform="translate(90 74) rotate(320) scale(.9)"/><use href="#cl2" transform="translate(114 77) rotate(60) scale(1.500)"/><use href="#cl2" transform="translate(110 84) rotate(150) scale(.8)"/><use href="#cl" transform="translate(110 44) rotate(15) scale(.7)"/><use href="#cl2" transform="translate(125 42) rotate(275) scale(.9)"/>
                <use href="#legend" transform="translate(3.500 67) scale(.34)"/>
              </svg>
            </article>
          </div>
        </div>
      </section>

      <!-- dashboard: filtered -->
      <section class="frame dash f-d3">
        <aside class="d-side">
          <div class="logo"><svg><use href="#shield"/></svg><span>CIRCADIAN RISK</span></div>
          <nav class="d-nav">
            <a><svg><use href="#n-user"/></svg>Admin Dashboard</a>
            <a><svg><use href="#n-bars"/></svg>Corrective Action Plan</a>
            <a class="on"><svg><use href="#n-shield"/></svg>Risk Optimization</a>
            <a><b class="q">?</b>Help</a>
          </nav>
          <small class="d-copy">© 2021 Circadian Risk, Inc.</small>
        </aside>
        <div class="d-main">
          <header class="d-head">
            <div class="d-titles"><h2>XYZ Organization</h2><p>Risk Optimization Analysis</p></div>
            <div class="d-tools">
              <div class="d-bar"><span class="on">MY SAVED VIEW</span><span>DEFAULT VIEW</span><svg class="t-plus"><use href="#t-plus"/></svg><em></em><svg class="t-i"><use href="#t-down"/></svg><svg class="t-i"><use href="#t-print"/></svg><span class="opt">FILTER OPTIONS</span></div>
              <p class="d-filter">Current Filter: <b class="act">Countermeasures Needed - Shot Detection</b><mark>✕ CLEAR FILTERS</mark></p>
            </div>
          </header>
          <div class="g1">
            <div class="g1-left">
              <article class="card wide">
                <header class="c-head"><span>Location Distribution</span><svg class="tools"><use href="#tools"/></svg></header>
                <svg class="chart px" viewBox="0 0 241 64">
                  <path d="M14 8h210M14 28h210M14 48h210" stroke="#2a2c34" stroke-width=".35" fill="none"/>
                  <use href="#bars1" transform="translate(-106.750 -77.400) scale(.35 .38)" opacity=".08"/>
                  <path d="M80 52v-4.500" stroke="#2f7de8" stroke-width="1.400"/><path d="M116 52v-4.500" stroke="#f0a04e" stroke-width="1.400"/><path d="M175 52v-4.500" stroke="#ee5a5f" stroke-width="1.400"/>
                  <g class="pl"><text x="10" y="9">10</text><text x="10" y="29">5</text><text x="10" y="49">0</text><text x="78" y="56" fill="#2f7de8">100</text><text x="114" y="56" fill="#f0a04e">200</text><text x="173" y="56" fill="#ee5a5f">300</text><text x="105" y="63">Scenario Numbers</text><text transform="translate(5.500 37) rotate(-90)">Number of Locations</text></g>
                </svg>
              </article>
              <article class="card">
                <header class="c-head"><span>Avg. Threat Scorecard</span><svg class="tools"><use href="#tools"/></svg></header>
                <div class="eq"><div><b>546</b><small>Inherent</small></div><i>−</i><div><b>249</b><small>Mitigated</small></div><i>=</i><div class="res orange"><b>297</b><small>Residual</small></div></div>
              </article>
              <article class="card dim">
                <header class="c-head"><span>Avg. Hazard Scorecard</span><svg class="tools"><use href="#tools"/></svg></header>
                <div class="eq pct"><div><small>−</small></div></div>
              </article>
              <article class="card dim">
                <header class="c-head"><span>Avg. Compliance Scorecard</span><svg class="tools"><use href="#tools"/></svg></header>
                <div class="eq pct"><div><small>−</small></div></div>
              </article>
              <article class="card">
                <header class="c-head"><span>Regional Metrics</span><svg class="tools"><use href="#tools"/></svg></header>
                <svg class="chart px" viewBox="0 0 75 77">
                  <path d="M34 10v24M44 10v24M54 10v24M64 10v24M74 10v24" stroke="#26282f" stroke-width=".35" fill="none"/>
                  <path d="M30 17h5" stroke="#2f7de8" stroke-width="1.800"/><path d="M30 23.300h5" stroke="#f0a04e" stroke-width="1.800"/><path d="M30 29.500h5" stroke="#ee5a5f" stroke-width="1.800"/>
                  <g class="pl" text-anchor="end"><text x="28" y="18">West</text><text x="28" y="24.300">South West</text><text x="28" y="30.500">Mid West</text></g>
                  <circle cx="6" cy="52" r="2" fill="#ee5a5f"/><circle cx="6" cy="60.500" r="2" fill="#f0a04e"/><circle cx="6" cy="69" r="2" fill="#2f7de8"/>
                  <g class="pl"><text x="11" y="53">High Risk</text><text x="11" y="61.500">Medium Risk</text><text x="11" y="70">Low Risk</text></g>
                  <g class="pl" text-anchor="end"><text x="69" y="53">1 Location</text><text x="69" y="61.500">1 Location</text><text x="69" y="70">1 Location</text></g>
                </svg>
              </article>
              <article class="card">
                <header class="c-head"><span>Buildings by Type</span><svg class="tools"><use href="#tools"/></svg></header>
                <svg class="chart px" viewBox="0 0 75 77">
                  <path d="M25 10v24M35 10v24M45 10v24M55 10v24M65 10v24" stroke="#26282f" stroke-width=".35" fill="none"/>
                  <path d="M25 23h16" stroke="#a13fd8" stroke-width="1.800"/>
                  <text class="pl" x="23" y="24" text-anchor="end">Substation</text><text class="pl" x="36" y="41">Number of Buildings</text>
                  <circle cx="7" cy="52" r="2" fill="#a13fd8"/><text class="pl" x="12" y="53">Substation</text><text class="pl" x="68" y="53" text-anchor="end">3 Buildings</text>
                </svg>
              </article>
              <article class="card">
                <header class="c-head"><span>Countermeasures Needed</span><svg class="tools"><use href="#tools"/></svg></header>
                <svg class="chart" viewBox="787 594 223 232">
                  <path d="M832 690A65 65 0 0 1 962 690" stroke="#0b0c11" stroke-width="5" fill="none"/>
                  <path d="M836 665A65 65 0 0 0 836 715" stroke="#4ea8de" stroke-width="5" fill="none"/>
                  <text class="tk teal" x="866" y="657">Remaining Projects</text>
                  <text class="gv" x="879" y="697">22</text>
                  <text class="tk teal" x="870" y="753">Estimated Cost</text>
                  <text class="gm" x="847" y="792">$218,623</text>
                </svg>
              </article>
            </div>
            <article class="card map">
              <header class="c-head"><span>Map View</span><svg class="tools"><use href="#tools2"/></svg></header>
              <svg class="chart px" viewBox="0 0 146 213">
                <path d="M15 21h7l117 15 6 2M15 21L4 69l2 34 16 23 23 7h22l21 23 16 3 12 20h13l16-23M0 52h146M0 130h146M110 0v213" stroke="#3c3e46" stroke-width=".45" fill="none"/>
                <circle cx="12" cy="106" r="6" fill="#2f7de8"/><circle cx="128" cy="87" r="1" fill="#ee5a5f"/><circle cx="122" cy="151" r="2.800" fill="#f0a04e"/>
                <g class="tag"><rect x="17" y="94" width="29" height="8" rx=".6"/><rect x="109" y="75" width="20" height="8" rx=".6"/><rect x="105" y="137" width="20" height="8" rx=".6"/></g>
                <g class="tagt" text-anchor="middle"><text x="31.500" y="99">LOS ANGELES</text><text x="119" y="80">OMAHA</text><text x="115" y="142">AUSTIN</text></g>
                <use href="#legend" transform="translate(3 179) scale(.34)"/>
              </svg>
            </article>
          </div>
        </div>
      </section>

      <section class="frame filters f-p4">
        <header class="fp-head"><b>Filters</b><svg class="x"><use href="#x"/></svg></header>
        <ul class="fp-list">
          <li>My Saved Filters<svg class="chev"><use href="#chev"/></svg></li><li>Date<svg class="chev"><use href="#chev"/></svg></li><li>Risk Percentile<svg class="chev"><use href="#chev"/></svg></li><li>Countermeasures Needed<svg class="chev"><use href="#chev"/></svg></li><li>Remediation Status<svg class="chev"><use href="#chev"/></svg></li><li>External Data Sets<svg class="chev"><use href="#chev"/></svg></li><li>Scenarios<svg class="chev"><use href="#chev"/></svg></li><li>Locations<svg class="chev"><use href="#chev"/></svg></li>
        </ul>
        <footer class="fp-foot"><span class="clear">Clear Filters</span><span>Apply Filters</span></footer>
      </section>

      <section class="frame tbl f-tc">
        <header class="c-head"><span>Location Distribution</span><svg class="tools"><use href="#tools"/></svg></header>
        <table class="tc"><colgroup><col class="c1"><col class="c2"><col class="c3"><col class="c4"><col class="c5"><col></colgroup>
          <thead><tr><th>Location</th><th>Region</th><th>PCI</th><th>ISO 27001</th><th>Shooter Preparedness</th><th>Average Residual Risk</th></tr></thead>
          <tbody>
            <tr><td>Substation #10</td><td>Los Angeles</td><td>4</td><td>11</td><td>37</td><td class="v-b">124</td></tr>
            <tr><td>Substation #3</td><td>Omaha</td><td>3</td><td>5</td><td>51</td><td class="v-r">364</td></tr>
            <tr><td>Substation #76</td><td>Austin</td><td>3</td><td>3</td><td>42</td><td class="v-o">283</td></tr>
          </tbody></table>
      </section>

      <!-- threat scorecards -->
      <section class="frame threat f-th1">
        <header class="c-head"><span>Avg. Threat Scorecard</span><svg class="tools"><use href="#tools"/></svg></header>
        <div class="th-item"><p class="th-loc">Los Angeles</p><div class="th-eq"><div><b>494</b><small>Inherent</small></div><i>−</i><div><b>357</b><small>Mitigated</small></div><i>=</i><div class="hi"><b>137</b><small>Residual</small></div></div><div class="th-pc"><span>Percent Change</span><strong>86.86%</strong></div><p class="th-link"><i></i>Risk Optimization</p></div>
        <div class="th-item"><p class="th-loc">Omaha</p><div class="th-eq"><div><b>572</b><small>Inherent</small></div><i>−</i><div><b>208</b><small>Mitigated</small></div><i>=</i><div class="hi"><b>364</b><small>Residual</small></div></div><div class="th-pc"><span>Percent Change</span><strong>95.05%</strong></div><p class="th-link"><i></i>Risk Optimization</p></div>
        <div class="th-item"><p class="th-loc">Austin</p><div class="th-eq"><div><b>572</b><small>Inherent</small></div><i>−</i><div><b>289</b><small>Mitigated</small></div><i>=</i><div class="hi"><b>283</b><small>Residual</small></div></div><div class="th-pc"><span>Percent Change</span><strong>93.64%</strong></div><p class="th-link"><i></i>Risk Optimization</p></div>
      </section>
      <section class="frame threat v2 f-th2">
        <header class="c-head"><span>Avg. Threat Scorecard</span><svg class="tools"><use href="#tools"/></svg></header>
        <div class="th-item"><p class="th-loc">Los Angeles</p><div class="th-eq"><div><b>494</b><small>Inherent</small></div><i>−</i><div><b>357</b><small>Mitigated</small></div><i>=</i><div class="hi"><b>137</b><small>Residual</small></div></div><div class="th-pc"><span>Percent Change:</span><strong>86.86%</strong></div><p class="th-link"><i></i>RISK OPTIMIZATION<br>EVALUATOR</p></div>
        <div class="th-item"><p class="th-loc">Omaha</p><div class="th-eq"><div><b>572</b><small>Inherent</small></div><i>−</i><div><b>208</b><small>Mitigated</small></div><i>=</i><div class="hi"><b>364</b><small>Residual</small></div></div><div class="th-pc"><span>Percent Change:</span><strong>95.05%</strong></div><p class="th-link"><i></i>RISK OPTIMIZATION<br>EVALUATOR</p></div>
        <div class="th-item"><p class="th-loc">Austin</p><div class="th-eq"><div><b>572</b><small>Inherent</small></div><i>−</i><div><b>289</b><small>Mitigated</small></div><i>=</i><div class="hi"><b>283</b><small>Residual</small></div></div><div class="th-pc"><span>Percent Change:</span><strong>93.64</strong></div><p class="th-link"><i></i>RISK OPTIMIZATION<br>EVALUATOR</p></div>
      </section>

      <!-- calculators -->
      <section class="frame calc off f-c1">
        <header class="ca-head"><span>Risk Optimization Calculator</span><svg class="x"><use href="#x"/></svg></header>
        <div class="ca-body">
          <div class="ca-col">
            <h3>SEGMENTS</h3>
            <div class="sl"><label>Recommendations</label><div class="track"><i class="fill" style="width:0%"></i></div><p><span>0</span><span>300</span></p></div>
            <div class="sl"><label>Budget</label><div class="track"><i class="fill" style="width:0%"></i></div><p><span>$0</span><span>$875,000</span></p></div>
            <div class="sl"><label>Target Residual Risk Score</label><div class="track"><i class="fill" style="width:0%"></i></div><p><span>450</span><span>50</span></p></div>
          </div>
          <div class="ca-col">
            <h3>SUMMARY</h3>
            <div class="sum"><label>Selected Recommendations</label><b>0</b></div>
            <div class="sum"><label>Selected Budget</label><b>$0</b></div>
            <div class="sum"><label>Change in Residual Risk</label><b>0</b></div>
          </div>
          <div class="ca-col score">
            <h3>NEW RESIDUAL RISK SCORE</h3>
            <strong>0</strong>
            <a>CLOSE →</a>
          </div>
        </div>
      </section>
      <section class="frame calc f-c2">
        <header class="ca-head"><span>Risk Optimization Calculator</span><svg class="x"><use href="#x"/></svg></header>
        <div class="ca-body">
          <div class="ca-col">
            <h3>SEGMENTS</h3>
            <div class="sl"><label>Recommendations</label><div class="track"><i class="fill" style="width:68%"></i></div><p><span>0</span><span>300</span></p></div>
            <div class="sl"><label>Budget</label><div class="track"><i class="fill" style="width:61%"></i></div><p><span>$0</span><span>$875,000</span></p></div>
            <div class="sl"><label>Target Residual Risk Score</label><div class="track"><i class="fill" style="width:76%"></i></div><p><span>450</span><span>50</span></p></div>
          </div>
          <div class="ca-col">
            <h3>SUMMARY</h3>
            <div class="sum"><label>Selected Recommendations</label><b>297</b></div>
            <div class="sum"><label>Selected Budget</label><b>$692,134</b></div>
            <div class="sum"><label>Change in Residual Risk</label><b>124</b></div>
          </div>
          <div class="ca-col score">
            <h3>NEW RESIDUAL RISK SCORE</h3>
            <strong>124</strong>
            <a>CLOSE →</a>
          </div>
        </div>
      </section>

      <div class="frame compset f-cs"><svg viewBox="0 0 18 5"><use href="#tools"/></svg><svg viewBox="0 0 18 5"><use href="#tools"/></svg></div>

      <div class="hscroll"><i></i></div>
    </main>

    <aside class="side side-r"></aside>
  </div>
</div>
</body>
</html>
```
FILE: styles.css
```css
*{box-sizing:border-box;margin:0;padding:0}
html,body{width:1920px;height:1080px;overflow:hidden;background:#fff}
body{font-family:Inter,"Liberation Sans",sans-serif}
i,u,s{font-style:normal;text-decoration:none}
ul{list-style:none}
.sprite{position:absolute;width:0;height:0}

.shell{width:1920px;height:1080px;display:flex;flex-direction:column;border-radius:14px 14px 0 0;overflow:hidden}
.titlebar{height:50px;background:#232323;display:grid;grid-template-columns:1fr auto 1fr;align-items:center;padding:0 15px}
.lights{display:flex;gap:7px;margin-left:6px}
.lights i{width:12px;height:12px;border-radius:50%}
.l-red{background:#fc5f61}.l-yellow{background:#fdbc40}.l-green{background:#3ec547}
.figma{width:17px;height:25px}
.dots{display:flex;gap:4px;justify-self:end}
.dots i{width:4px;height:4px;border-radius:50%;background:#565656}

.toolbar{height:43px;background:#2f2f2f;display:flex;align-items:center;justify-content:space-between;padding:0 52px 0 21px;position:relative}
.tb-left,.tb-right{display:flex;align-items:center;gap:10px}
.tb-circle{width:28px;height:28px;border-radius:50%;background:#444;border:1px solid #5c5c5c}
.figma-o{width:18px;height:27px;margin-right:6px}
.tb-brand{color:#505050;font-size:12px;letter-spacing:5.850px;font-weight:500;position:absolute;left:831px;top:14px}
.hlogo{width:28px;height:28px;margin-right:4px}
.tb-blue{width:72px;height:28px;border-radius:3px;background:#0053a5;border:1px solid #0a64bb}

.body{flex:1;display:flex;min-height:0}
.side{width:169px;background:#3f3f3f;flex:none;padding:27px 14px 0}
.side-r{width:169px}
.pills{display:flex;flex-direction:column;gap:20px}
.pills i{display:block;height:11px;width:141px;border-radius:6px;background:#666}
.rows{display:flex;flex-direction:column;gap:16px;margin-top:47px}
.s-row{display:flex;align-items:center;gap:10px;height:21px;padding-left:1px}
.s-row b{width:21px;height:21px;border-radius:50%;background:#666;flex:none}
.s-row i{height:11px;width:109px;border-radius:6px;background:#666}
.s-row.in{padding-left:32px;gap:13px}
.s-row.in i{width:74px}

.canvas{flex:1;position:relative;background:#cfd7da;overflow:hidden}
.page-title{position:absolute;left:168px;top:34px;font-weight:300;font-size:31px;letter-spacing:3.900px;line-height:40px;color:#111;white-space:nowrap}

.frame{position:absolute;overflow:hidden;background:#191b23;color:#9a9ca4;filter:blur(.35px)}
.f-ta{left:167px;top:120px;width:242px;height:76px}
.f-tb{left:167px;top:210px;width:242px;height:227px}
.f-tc{left:268px;top:787px;width:242px;height:77px}
.f-d1{left:432px;top:120px}
.f-d2{left:258.500px;top:471px}
.f-d3{left:790px;top:481px}
.f-p1{left:967px;top:120px}
.f-p2{left:1103px;top:120px}
.f-p3{left:1240px;top:120px}
.f-p4{left:1310px;top:481px}
.f-m1{left:168px;top:518px;height:104px}
.f-m2{left:168px;top:637px;height:104px}
.f-dd1{left:171px;top:763px;width:59px;height:43px}
.f-dd2{left:174px;top:835px;width:54px;height:24px}
.f-th1{left:547px;top:787px}
.f-th2{left:637px;top:787px}
.f-c1{left:733px;top:786px}
.f-c2{left:998px;top:786px}
.f-cs{left:1263px;top:794px}

.c-head{display:flex;align-items:center;justify-content:space-between;height:13px;padding:0 5px 0 6px;font-size:3.500px;color:#b9bbc2;flex:none}
.tools{width:20px;height:5.500px;flex:none}

.tbl{border-radius:5px;box-shadow:0 0 1px #555}
.tbl .c-head{height:14px}
.tbl table{border-collapse:collapse;table-layout:fixed;width:236px;margin-left:6px;font-size:3.600px}
.tbl th{font-weight:400;text-align:left;color:#b4b6bd;height:9px}
.tbl td{color:#64666e;height:7.600px;line-height:7.600px;padding:0;white-space:nowrap}
.c1{width:37px}.c2{width:35px}.c3{width:29px}.c4{width:40px}.c5{width:52px}
.t-scroll{position:absolute;right:5px;top:23px;width:1px;background:#383a42}
.t-s1{height:48px}.t-s2{height:197px}
.t-s1::before,.t-s2::before{content:"";display:block;width:1px;height:16px;background:#8c8e95}
.t-s2::before{height:60px}
.tc td{color:#8a8c94}.tc .v-b{color:#2f7de8}.tc .v-r{color:#ee5a5f}.tc .v-o{color:#f0a04e}

.dash{width:502px;height:282px;display:flex;background:#0f1119}
.d-side{width:84px;background:#14161e;display:flex;flex-direction:column;flex:none;padding:10px 0 8px 10px}
.logo{display:flex;align-items:center;gap:2px;height:14px}
.logo svg{width:13px;height:13px}
.logo span{font-size:4.800px;font-weight:800;color:#e8e8ec;letter-spacing:.35px;transform:scaleX(1.120);transform-origin:left}
.d-nav{display:flex;flex-direction:column;gap:12.400px;margin-top:23.500px}
.d-nav a{display:flex;align-items:center;gap:5px;font-size:5px;color:#6d6f77;height:6px;white-space:nowrap;padding-left:2px}
.d-nav svg{width:6px;height:6px;flex:none}
.d-nav .on{color:#1fb8a6}
.q{width:6px;font-weight:300;text-align:center;font-size:6px}
.d-copy{margin-top:auto;font-size:2.800px;color:#60626a;text-align:center;padding-right:10px}
.d-main{flex:1;padding:10px 8px 0 9px;min-width:0}
.d-head{display:flex;height:37px}
.d-head.short{height:34px}
.d-titles{width:135px;flex:none}
.d-titles h2{font-size:12.300px;font-weight:300;color:#eceef2;line-height:14px;letter-spacing:.2px;white-space:nowrap}
.d-titles p{font-size:5.500px;color:#a6a8b0;margin-top:5px;letter-spacing:.1px}
.d-tools{flex:1;min-width:0}
.d-bar{height:15px;border-radius:3px;background:#181a22;display:flex;align-items:center;gap:5px;padding:0 7px 0 11px;font-size:3.700px;letter-spacing:.45px;color:#5d5f67;white-space:nowrap}
.d-bar .on{color:#1fb8a6;margin-right:4px}
.d-bar em{flex:1}
.d-bar .opt{color:#85878f;margin-left:3px}
.t-plus{width:5px;height:5px;margin-left:4px}
.t-i{width:8px;height:7px;margin-left:1px}
.d-filter{font-size:3.500px;color:#8c8e96;margin-top:6px;display:flex;align-items:center;gap:3px;height:7px}
.d-filter b{font-weight:400;color:#3c3e46}
.d-filter .act{color:#1fb8a6}
.d-filter mark{background:none;border:.5px solid #2c3a40;color:#3f4650;padding:1px 3px;margin-left:2px}

.g1{display:flex;gap:12px}
.g1-left{display:grid;grid-template-columns:75px 75px 75px;grid-template-rows:76.500px 38px 90px;gap:10px 9px;align-content:start;padding-top:1px}
.card{background:#191b23;border-radius:5px;overflow:hidden;display:flex;flex-direction:column;min-width:0}
.wide{grid-column:1/-1}
.map{background:#25272e;width:146px;height:227px}
.chart{display:block;width:100%;flex:1;min-height:0;overflow:hidden}
.chart text{fill:#85878f;font-family:Inter,sans-serif}
.tk{font-size:8px}.tk text{font-size:8px}
.lb text{font-size:9px}
.chart .teal{fill:#1fb8a6}
.chart .gv{font-size:33px;font-weight:300;fill:#2cc3b5;letter-spacing:1px}
.chart .gm{font-size:25px;font-weight:300;fill:#2cc3b5;letter-spacing:.5px}
.chart .sm{font-size:7.500px;fill:#a6a8b0}
.pl,.pl text{font-size:2.700px}
.chart .big{font-size:3.300px}
.chart .dv{font-size:5px;fill:#e9e9ee}
.chart .cost{font-size:6.600px;font-weight:300;fill:#22b8a8}
.chart .cost.red{fill:#d94f4f}
.tag rect{fill:#0f2a2c;stroke:#1fa596;stroke-width:.45}
.chart .tagt text{font-size:2.800px;fill:#2cc3b5}

.eq{display:flex;justify-content:center;align-items:flex-start;gap:2.500px;padding-top:3px;flex:1}
.eq b{display:block;font-weight:300;font-size:9.400px;line-height:10px;color:#2cc3b5;text-align:center}
.eq i{font-size:8px;line-height:10px;color:#2cc3b5}
.eq small{display:block;font-size:2.200px;color:#4c4e56;text-align:center;margin-top:1px}
.eq .res b{color:#f0c9c0}
.eq .orange b{color:#f0a878}
.eq.pct b{color:#8e8aa8;font-size:9.400px}
.dim{opacity:.35}

.g2{display:grid;grid-template-columns:75px 75px 75px 146px;grid-template-rows:103px 115px;gap:11px 10px}
.tasks{grid-column:2/4}
.g2 .map{width:146px;height:115px}
.create{font-size:2.900px;line-height:3.500px;text-align:center;color:#1fb8a6;margin-top:5.500px;letter-spacing:.2px}
.cal-m{font-size:3px;line-height:3.500px;color:#6a6c74;text-align:center;margin-top:11px}
.cal{display:grid;grid-template-columns:repeat(7,7.600px);grid-auto-rows:8px;justify-content:center;margin-top:.800px;font-size:2.500px;color:#4c4e56;text-align:center}
.cal u,.cal s{display:flex;align-items:center;justify-content:center;line-height:1}
.cal u{color:#6f7179}
.cal .h-r,.cal .h-b,.cal .h-t{width:7px;height:7px;border-radius:50%;margin:.5px;color:#fff}
.h-r{background:#f2928f}.h-b{background:#2f7de8}.h-t{border:.6px solid #2cc3b5}
.cal-l{display:flex;align-items:center;justify-content:center;gap:1.500px;font-size:2.900px;line-height:3.500px;color:#9a9ca4;margin-top:8.700px}
.cal-l i,.m-foot i,.t-foot i{display:inline-block;width:3px;height:3px;border-radius:50%}
.d-r{background:#f2928f}.d-b{background:#2f7de8}.d-o{background:#f0a04e}
.d-t{border:.5px solid #2cc3b5}
.cal-l i:not(:first-child){margin-left:3px}
.t-foot{height:16px;background:#13162a;flex:none;display:flex;align-items:center;justify-content:space-around;padding:0 10px;font-size:3.700px;color:#a2a4ac}
.t-foot span{display:flex;align-items:center;gap:2px}

.filters{width:105px;height:282px;background:#1c1e26;display:flex;flex-direction:column}
.fp-head{height:23px;padding:0 7px;display:flex;align-items:center;justify-content:space-between;color:#d6d8dd;font-size:5.800px;flex:none}
.fp-head b{font-weight:500}
.x{width:4px;height:4px;color:#d6d8dd}
.fp-list{flex:1;padding-top:3px;font-size:5px;letter-spacing:.16px;color:#7a7c84}
.fp-list li{height:19.100px;padding:0 7px;display:flex;align-items:center;justify-content:space-between;white-space:nowrap}
.chev{width:4px;height:3px;color:#777981;flex:none}
.fp-list .open{display:block;height:76px;background:#12141b}
.open-h{display:flex;align-items:center;justify-content:space-between;height:18.600px;margin-bottom:-2.200px;color:#1fb8a6}
.opt{display:flex;align-items:center;gap:4px;height:13.300px;padding-left:1.500px}
.fp-list .opt i{width:4.500px;height:4.500px;border:.5px solid #5a5c64;flex:none;border-radius:.6px}
.fp-list .sel{color:#1fb8a6}
.fp-list .sel i{background:#1fc9b6;border-color:#1fc9b6;box-shadow:inset 0 0 0 .8px #12141b}
.fp-foot{height:20px;background:#14161c;display:flex;align-items:center;justify-content:space-between;padding:0 6px 0 7px;font-size:5px;letter-spacing:.12px;color:#41434b;flex:none}
.fp-foot .apply{color:#1fc9b6;font-weight:500}
.fp-foot .clear{color:#c9525f}

.mob{width:74px;border-radius:5px;display:flex;flex-direction:column;font-size:3px}
.mob .c-head{height:14px;padding:0 5px;font-size:3.300px}
.mob .tools{width:16px;height:4.400px}
.m-list{padding-top:0}
.m-list li{height:11.700px;display:flex;align-items:center;padding:0 12px 0 7px;gap:3px;border-bottom:.4px solid #26282f;color:#aaacb3;white-space:nowrap;font-size:2.900px}
.m-list span{margin-left:auto}
.m-list i{width:2.500px;height:2.500px;border-radius:50%}
.m-scroll{position:absolute;right:5.500px;top:17px;width:1px;height:17px;background:#5c5e66}
.m-s2{top:31px;height:23px}
.m-sel{font-size:3px;color:#6f6fa0;padding:2px 7px 4px}
.m-foot{margin-top:auto;height:15px;background:#121630;display:flex;align-items:center;padding-left:7px;gap:1.500px;font-size:2.900px;color:#9a9ca4}
.m-foot i:last-of-type{margin-left:3px}

.menu{border-radius:3px;display:flex;flex-direction:column;justify-content:space-around;padding:2px 5px;font-size:3.500px;color:#c9cbd1;white-space:nowrap;box-shadow:0 2px 5px rgba(0,0,0,.35);overflow:visible}
.menu .on{color:#1fc9b6}

.threat{width:74px;height:139px;border-radius:5px;display:flex;flex-direction:column}
.threat .c-head{height:14px;font-size:3.500px;margin-bottom:-6.300px}
.threat .tools{width:18px;height:5px}
.th-item{height:43.300px;padding:4.300px 6px 0;border-bottom:.4px solid #26282f;flex:none}
.th-item:last-child{border:0}
.th-loc{font-size:3.800px;color:#60626a;line-height:4.500px}
.th-eq{display:flex;justify-content:space-between;align-items:flex-start;margin-top:.500px}
.th-eq b{display:block;font-weight:300;font-size:8.800px;line-height:9px;color:#5b5d66;text-align:center}
.th-eq i{font-size:7px;line-height:9px;color:#777}
.th-eq small{display:block;font-size:1.800px;line-height:2px;color:#4c4e56;text-align:center}
.th-eq .hi b{color:#b7b5e8;font-weight:400}
.th-pc{display:flex;align-items:center;justify-content:space-between;margin-top:-.5px;height:11px}
.th-pc span{width:17px;font-size:3.300px;line-height:4.800px;color:#c9cbd1;font-weight:500}
.th-pc strong{font-weight:400;font-size:9.800px;color:#eceef2}
.th-link{font-size:2.900px;line-height:3.500px;color:#1fb8a6;display:flex;align-items:center;gap:1.500px;padding-left:16px;margin-top:3.700px}
.th-link i{width:3.500px;height:3.500px;background:#1fb8a6;border-radius:.4px;flex:none}
.v2 .c-head{margin-bottom:-5.800px}
.v2 .th-item{height:43.500px;padding-top:6.600px}
.v2 .th-eq b{font-size:9px}
.v2 .th-eq small{margin-top:1.500px}
.v2 .th-pc{justify-content:flex-start;gap:2px;height:6px;margin-top:1px}
.v2 .th-pc span{width:auto;font-weight:300;font-size:3.500px;color:#60626a}
.v2 .th-pc strong{font-size:3.300px;font-weight:600}
.v2 .th-link{padding-left:1px;margin-top:4.300px;line-height:5px;font-size:2.800px;align-items:flex-start}

.calc{width:251px;height:140px;border-radius:5px;display:flex;flex-direction:column;box-shadow:0 0 1px #555}
.ca-head{height:14px;padding:0 4px 0 6.500px;display:flex;align-items:center;justify-content:space-between;font-size:3.400px;color:#d6d8dd;flex:none}
.ca-head .x{color:#8a8c94}
.ca-body{display:grid;grid-template-columns:85.500px 72px 1fr;padding:0 0 0 6.500px;flex:1}
.ca-col h3{font-weight:400;font-size:4.200px;color:#7a7c84;margin-top:10px;letter-spacing:.2px;height:11px;line-height:5px}
.sl{height:33px;padding-top:6.500px;width:76px}
.sl label,.sum label{display:block;font-size:3px;color:#7a7c84;line-height:4px}
.track{height:1.600px;background:#4a4c54;margin-top:8px;position:relative}
.fill{display:block;height:100%;background:linear-gradient(90deg,#6a24dc,#d040e8);position:relative}
.fill::after{content:"";position:absolute;right:-1px;top:-2.700px;width:2px;height:7px;background:#fff;border-radius:.5px}
.sl p{display:flex;justify-content:space-between;font-size:2.300px;color:#5e6068;margin-top:5px}
.sum{height:33px;padding-top:6.500px}
.sum b{display:block;font-weight:300;font-size:12.500px;line-height:16px;color:#eceef2;letter-spacing:.2px;margin-top:3.200px}
.score{text-align:center;padding-right:21px}
.score h3{color:#1fb8a6;font-size:4.400px;white-space:nowrap;display:flex;justify-content:center;letter-spacing:.1px}
.score strong{display:block;font-weight:300;font-size:38px;line-height:36px;letter-spacing:2px;color:#17e5d0;margin-top:5.300px}
.score a{display:block;font-size:3.900px;line-height:5px;color:#1fb8a6;margin-top:22.500px;letter-spacing:.1px}
.off .sum b,.off .score strong{color:#2f3138}
.off .score h3,.off .score a{color:#33353d}

.compset{width:28px;height:19px;background:none;border:.7px dashed #a6a9d8;border-radius:2px;display:flex;flex-direction:column;justify-content:space-between;padding:2px 3px}
.compset svg{width:18px;height:5px}

.hscroll{position:absolute;left:0;right:0;bottom:0;height:8px;background:#939ba0;border-top:1px solid #7d858a}
.hscroll i{position:absolute;left:180px;width:582px;top:0;bottom:0;background:#c6ccd0;border-radius:4px}
```
